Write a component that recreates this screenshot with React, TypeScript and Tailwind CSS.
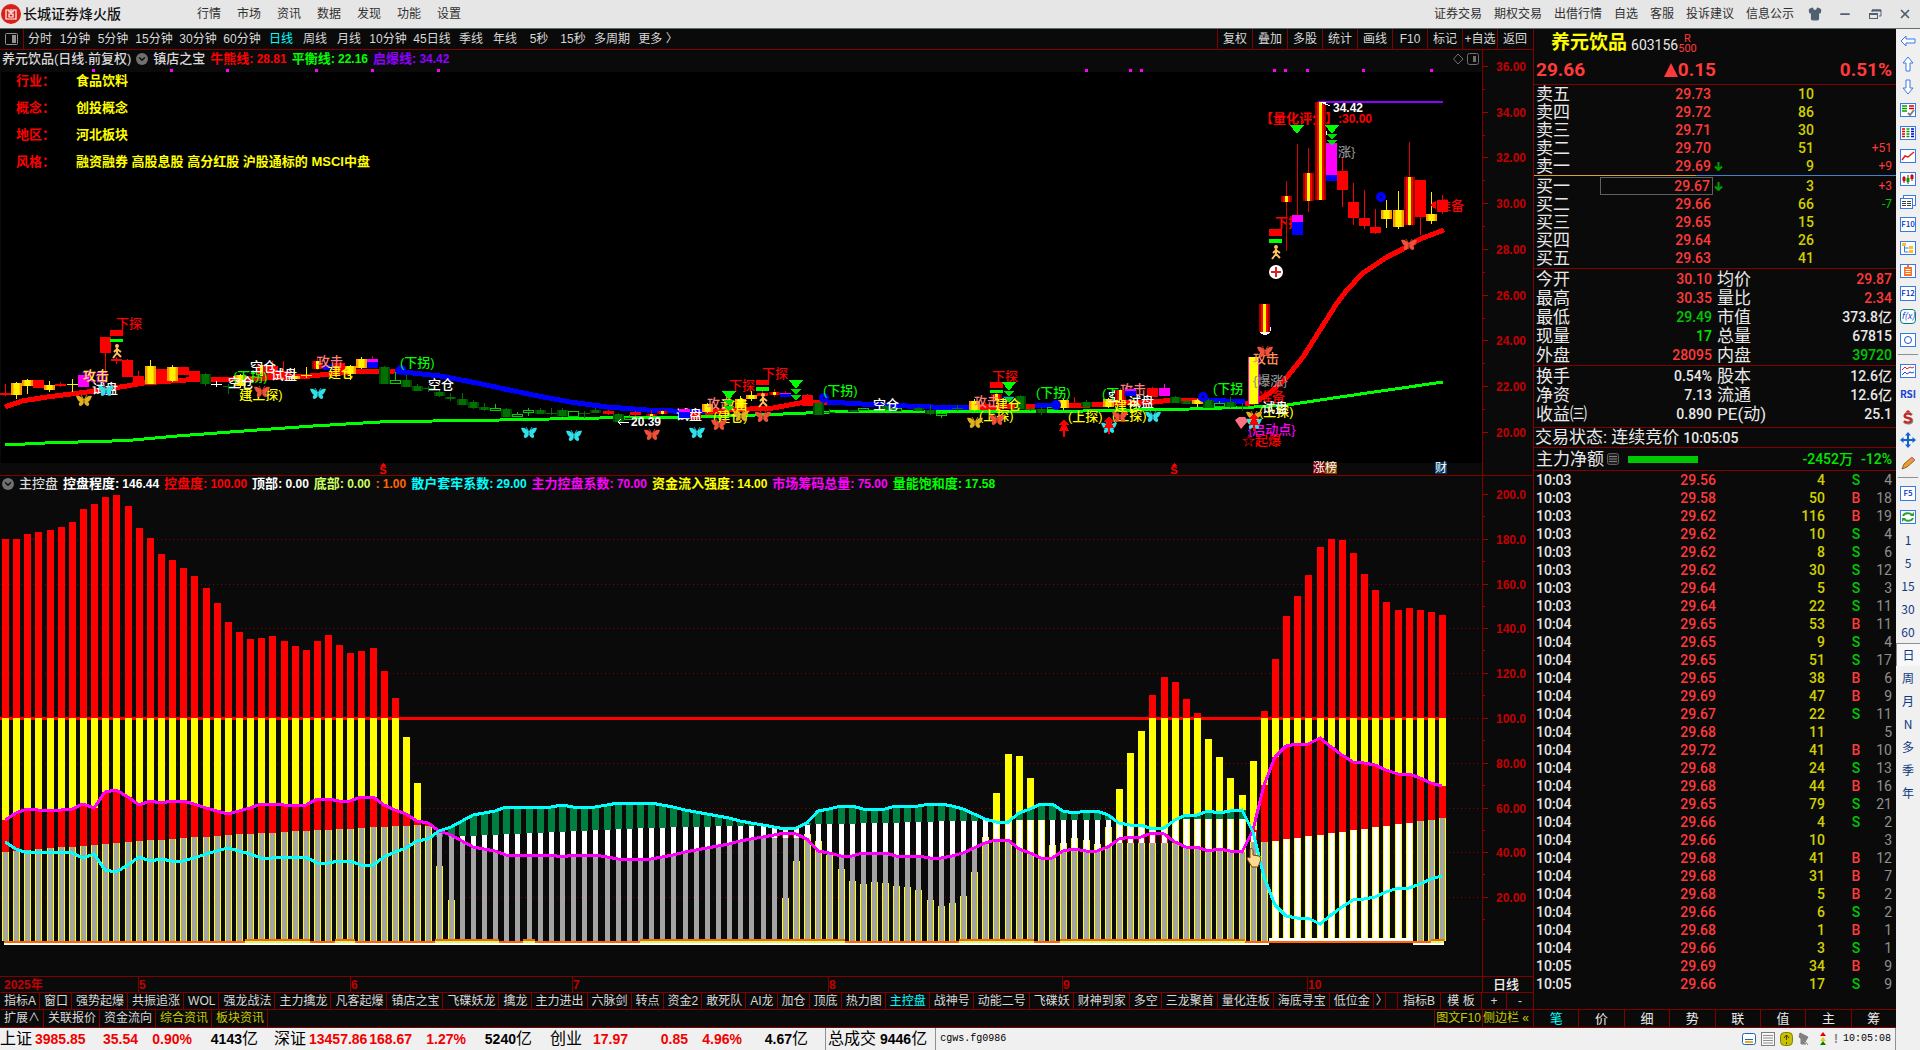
import type { ReactNode } from 'react';
import { Shirt, Minus, X, ChevronDown } from 'lucide-react';

const menus = ['行情', '市场', '资讯', '数据', '发现', '功能', '设置'];
const links = ['证券交易', '期权交易', '出借行情', '自选', '客服', '投诉建议', '信息公示'];

const periods: [string, string][] = [
  ['分时', 'w-8'],
  ['1分钟', 'w-[38px]'],
  ['5分钟', 'w-[38px]'],
  ['15分钟', 'w-11'],
  ['30分钟', 'w-11'],
  ['60分钟', 'w-11'],
  ['日线', 'w-[34px]'],
  ['周线', 'w-[34px]'],
  ['月线', 'w-[34px]'],
  ['10分钟', 'w-11'],
  ['45日线', 'w-11'],
  ['季线', 'w-[34px]'],
  ['年线', 'w-[34px]'],
  ['5秒', 'w-[34px]'],
  ['15秒', 'w-[34px]'],
  ['多周期', 'w-11'],
  ['更多 〉', 'w-12'],
];
const tools = ['复权', '叠加', '多股', '统计', '画线', 'F10', '标记', '+自选', '返回'];

const info = [
  ['行业：', '食品饮料'],
  ['概念：', '创投概念'],
  ['地区：', '河北板块'],
  ['风格：', '融资融券 高股息股 高分红股 沪股通标的 MSCI中盘'],
];

const mainLegend = [
  ['牛熊线:', '28.81', 'text-[#ff0000]'],
  ['平衡线:', '22.16', 'text-[#00ff00]'],
  ['启爆线:', '34.42', 'text-[#9000ff]'],
];
const subLegend = [
  ['控盘程度:', '146.44', 'text-white'],
  ['控盘度:', '100.00', 'text-[#ff0000]'],
  ['顶部:', '0.00', 'text-white'],
  ['底部:', '0.00', 'text-[#ccff66]'],
  [':', '1.00', 'text-[#ff6600]'],
  ['散户套牢系数:', '29.00', 'text-[#00ffff]'],
  ['主力控盘系数:', '70.00', 'text-[#ff00ff]'],
  ['资金流入强度:', '14.00', 'text-[#ffff00]'],
  ['市场筹码总量:', '75.00', 'text-[#ff00ff]'],
  ['量能饱和度:', '17.58', 'text-[#00ff00]'],
];

const tabs = [
  '指标A', '窗口', '强势起爆', '共振追涨', 'WOL', '强龙战法', '主力擒龙', '凡客起爆', '镇店之宝', '飞碟妖龙',
  '擒龙', '主力进出', '六脉剑', '转点', '资金2', '敢死队', 'AI龙', '加仓', '顶底', '热力图', '主控盘', '战神号',
  '动能二号', '飞碟妖', '财神到家', '多空', '三龙聚首', '量化连板', '海底寻宝', '低位金',
];

const asks = [
  ['卖五', '29.73', '', '10', ''],
  ['卖四', '29.72', '', '86', ''],
  ['卖三', '29.71', '', '30', ''],
  ['卖二', '29.70', '', '51', '+51'],
  ['卖一', '29.69', 'd', '9', '+9'],
];
const bids = [
  ['买一', '29.67', 'd', '3', '+3'],
  ['买二', '29.66', '', '66', '-7'],
  ['买三', '29.65', '', '15', ''],
  ['买四', '29.64', '', '26', ''],
  ['买五', '29.63', '', '41', ''],
];

const R = 'text-[#ff3a3a]';
const G = 'text-[#00c800]';
const W = 'text-[#e8e8e8]';
const stats1 = [
  ['今开', '30.10', R, '均价', '29.87', R],
  ['最高', '30.35', R, '量比', '2.34', R],
  ['最低', '29.49', G, '市值', '373.8亿', W],
  ['现量', '17', 'text-[#00e600]', '总量', '67815', W],
  ['外盘', '28095', R, '内盘', '39720', G],
];
const stats2 = [
  ['换手', '0.54%', W, '股本', '12.6亿', W],
  ['净资', '7.13', W, '流通', '12.6亿', W],
  ['收益㈢', '0.890', W, 'PE(动)', '25.1', W],
];

const ticks = [
  ['10:03', '29.56', '4', 'S', '4'],
  ['10:03', '29.58', '50', 'B', '18'],
  ['10:03', '29.62', '116', 'B', '19'],
  ['10:03', '29.62', '10', 'S', '4'],
  ['10:03', '29.62', '8', 'S', '6'],
  ['10:03', '29.62', '30', 'S', '12'],
  ['10:03', '29.64', '5', 'S', '3'],
  ['10:03', '29.64', '22', 'S', '11'],
  ['10:04', '29.65', '53', 'B', '11'],
  ['10:04', '29.65', '9', 'S', '4'],
  ['10:04', '29.65', '51', 'S', '17'],
  ['10:04', '29.65', '38', 'B', '6'],
  ['10:04', '29.69', '47', 'B', '9'],
  ['10:04', '29.67', '22', 'S', '11'],
  ['10:04', '29.68', '11', '', '5'],
  ['10:04', '29.72', '41', 'B', '10'],
  ['10:04', '29.68', '24', 'S', '13'],
  ['10:04', '29.68', '44', 'B', '16'],
  ['10:04', '29.65', '79', 'S', '21'],
  ['10:04', '29.66', '4', 'S', '2'],
  ['10:04', '29.66', '10', '', '3'],
  ['10:04', '29.68', '41', 'B', '12'],
  ['10:04', '29.68', '31', 'B', '7'],
  ['10:04', '29.68', '5', 'B', '2'],
  ['10:04', '29.66', '6', 'S', '2'],
  ['10:04', '29.68', '1', 'B', '1'],
  ['10:04', '29.66', '3', 'S', '1'],
  ['10:05', '29.69', '34', 'B', '9'],
  ['10:05', '29.66', '17', 'S', '9'],
];

/* ---------- main chart ---------- */

// kind, x, body top, body bottom, wick top, wick bottom
type CandleRow = [string, number, number, number, number, number];
const candles: CandleRow[] = [
  ['r', 0, 393, 395, 384, 396], ['y', 11, 383, 395, 382, 399], ['y', 22, 380, 386, 379, 394], ['r', 33, 380, 388, 380, 388],
  ['y', 44, 385, 390, 381, 392], ['r', 55, 384, 386, 382, 387], ['y1', 67, 384, 385, 379, 392], ['m', 78, 375, 387, 375, 387],
  ['r', 100, 337, 353, 337, 371], ['r', 111, 359, 361, 357, 364], ['r', 122, 360, 377, 359, 377], ['r', 133, 376, 386, 371, 386],
  ['r', 156, 369, 382, 369, 382], ['y', 145, 366, 384, 360, 384], ['r', 178, 367, 375, 367, 375], ['y', 167, 367, 381, 365, 382],
  ['r', 189, 371, 381, 371, 381], ['g', 200, 374, 384, 373, 386], ['w1', 211, 384, 385, 381, 387], ['g1', 223, 386, 387, 384, 394],
  ['y', 235, 375, 386, 374, 388], ['r', 267, 366, 379, 361, 379], ['ry', 256, 365, 376, 364, 378], ['r', 278, 371, 379, 361, 379],
  ['y', 289, 376, 379, 368, 379], ['y1', 301, 375, 376, 367, 378], ['ry', 312, 361, 369, 356, 370], ['b', 323, 365, 370, 364, 370],
  ['r', 334, 363, 372, 363, 372], ['y', 345, 366, 374, 365, 380], ['y', 356, 359, 368, 357, 369], ['mb', 367, 359, 368, 356, 368],
  ['g', 379, 367, 384, 366, 384], ['h', 390, 380, 384, 372, 384], ['g', 401, 380, 387, 375, 387], ['g', 412, 386, 391, 384, 391],
  ['g1', 423, 388, 389, 386, 392], ['g', 434, 392, 396, 390, 397], ['g', 445, 397, 399, 393, 401], ['g', 457, 399, 405, 393, 405],
  ['g', 468, 402, 408, 400, 409], ['g', 479, 407, 410, 403, 411], ['h', 490, 408, 411, 404, 411],
  ['g', 501, 409, 417, 408, 417], ['h', 512, 414, 417, 412, 417], ['h', 523, 410, 413, 408, 416], ['g', 535, 410, 414, 408, 414],
  ['g1', 546, 413, 414, 408, 415], ['g', 557, 410, 416, 408, 417], ['h', 568, 411, 417, 411, 417], ['g1', 579, 413, 414, 411, 418],
  ['g', 590, 410, 413, 408, 413], ['r', 603, 411, 414, 410, 415], ['g', 613, 414, 422, 413, 422], ['h', 624, 417, 420, 415, 420],
  ['r', 630, 412, 415, 411, 416], ['ry', 646, 414, 416, 410, 417], ['ry', 657, 411, 414, 410, 415], ['r', 690, 413, 419, 410, 419],
  ['y', 702, 404, 412, 403, 413], ['y', 735, 399, 408, 396, 408], ['y', 746, 395, 399, 391, 401],
  ['r', 757, 393, 396, 391, 397], ['ry', 769, 392, 395, 389, 397], ['mb', 780, 393, 397, 391, 397], ['r', 802, 395, 406, 394, 406],
  ['g', 813, 403, 415, 402, 415], ['g1', 824, 412, 413, 409, 414], ['g', 848, 410, 412, 410, 412], ['h', 858, 408, 411, 408, 411],
  ['g', 880, 406, 410, 405, 411], ['h', 891, 408, 412, 408, 412], ['g', 913, 408, 411, 407, 411], ['g', 925, 410, 414, 405, 415],
  ['h', 936, 413, 416, 411, 418], ['g1', 952, 408, 409, 405, 411], ['y', 969, 401, 410, 399, 411], ['r', 980, 404, 410, 402, 410],
  ['ry', 991, 394, 400, 393, 404], ['b', 1003, 396, 401, 395, 401], ['g', 1015, 396, 409, 395, 409], ['g1', 1025, 409, 410, 407, 411],
  ['g', 1036, 409, 413, 407, 415], ['h', 1047, 407, 410, 404, 410], ['y', 1058, 400, 408, 399, 410], ['r', 1069, 403, 407, 397, 408],
  ['g', 1081, 402, 407, 400, 408], ['y', 1103, 399, 407, 398, 408], ['r', 1147, 388, 397, 387, 397], ['m', 1159, 388, 396, 384, 396],
  ['g', 1170, 397, 403, 396, 403], ['g', 1181, 401, 404, 400, 404],
  ['y', 1192, 400, 404, 399, 407], ['g', 1203, 400, 408, 399, 408], ['h', 1214, 403, 407, 401, 407], ['g', 1225, 402, 407, 397, 408],
  ['g1', 1237, 406, 407, 403, 411], ['my', 1248, 357, 404, 357, 404], ['ry', 1259, 304, 332, 304, 332], ['ry', 1281, 196, 202, 181, 251],
  ['mb', 1292, 215, 235, 144, 235], ['ry', 1303, 173, 201, 148, 212], ['ry', 1315, 102, 200, 102, 200], ['mb2', 1326, 143, 181, 143, 181],
  ['r', 1337, 171, 190, 157, 207], ['r', 1348, 202, 218, 183, 225], ['r', 1359, 218, 226, 190, 229], ['r', 1370, 227, 233, 209, 234],
  ['y', 1381, 210, 219, 200, 228], ['y', 1393, 210, 227, 191, 229], ['ry', 1404, 177, 225, 142, 226], ['r', 1415, 180, 217, 180, 235],
  ['y', 1426, 214, 221, 192, 224], ['r', 1437, 200, 212, 195, 214],
];
// drawn over the signal texts
const topCandles: CandleRow[] = [
  ['mb', 679, 409, 418, 408, 418], ['ry', 1115, 390, 400, 388, 402], ['mb', 1125, 389, 396, 388, 396],
];

const wickColors: Record<string, string> = {
  r: '#ff0000', ry: '#dd0000', y: '#ffee00', y1: '#ffee00', g: '#007000', g1: '#007000', w1: '#ffffff',
  h: '#00d000', m: '#ff00ff', mb: '#dd0000', mb2: '#ff00ff', my: '#ff00ff', b: '#0000ff',
};

function Candle({ row }: { row: CandleRow }) {
  const [kind, x, top, bottom, wt, wb] = row;
  const h = bottom - top;
  const wick = wickColors[kind];
  return (
    <g>
      <rect x={x + 5} y={wt} width={1} height={wb - wt} fill={wick} />
      {kind === 'r' && <rect x={x} y={top} width={11} height={h} fill="#ff0000" />}
      {kind === 'm' && <rect x={x} y={top} width={11} height={h} fill="#ff00ff" />}
      {kind === 'b' && <rect x={x} y={top} width={11} height={h} fill="#0000ff" />}
      {kind === 'g' && <><rect x={x} y={top} width={11} height={h} fill="#004800" /><rect x={x + 2} y={top} width={7} height={h} fill="#007000" /></>}
      {kind === 'h' && <><rect x={x} y={top} width={11} height={h} fill="#00d000" /><rect x={x + 1} y={top + 1} width={9} height={Math.max(h - 2, 1)} fill="#000000" /></>}
      {kind === 'y' && <><rect x={x} y={top} width={11} height={h} fill="#ff9900" /><rect x={x + 2} y={top} width={7} height={h} fill="#ffcc00" /><rect x={x + 3} y={top} width={5} height={h} fill="#fff000" /></>}
      {kind === 'ry' && <><rect x={x} y={top} width={11} height={h} fill="#990000" /><rect x={x + 2} y={top} width={7} height={h} fill="#ff0000" /><rect x={x + 4} y={top} width={3} height={h} fill="#ffff00" /></>}
      {kind === 'my' && <><rect x={x} y={top} width={11} height={h} fill="#ff00ff" /><rect x={x + 1} y={top} width={9} height={h} fill="#ffff00" /></>}
      {kind === 'mb' && <><rect x={x} y={top} width={11} height={h} fill="#0000ff" /><rect x={x} y={top} width={11} height={h * 0.35} fill="#ff00ff" /></>}
      {kind === 'mb2' && <><rect x={x} y={top} width={11} height={h} fill="#0000ff" /><rect x={x} y={top} width={11} height={h - 6} fill="#ff00ff" /></>}
      {(kind === 'y1' || kind === 'g1' || kind === 'w1') && <rect x={x} y={top} width={11} height={1} fill={wick} />}
    </g>
  );
}

const marks: [string, number, number, string][] = [
  ['下探', 116, 323, '#ff0000'], ['攻击', 82, 376, '#ff00ff'], ['攻击', 83, 375, '#ffe640'], ['试盘', 92, 388, '#ffffff'],
  ['(下拐)', 233, 376, '#00ff00'], ['空仓', 250, 366, '#ffffff'], ['空仓', 228, 382, '#ffffff'], ['试盘', 271, 374, '#ffffff'],
  ['建', 239, 394, '#ffff00'], ['(上探)', 248, 394, '#ffff00'], ['攻击', 317, 361, '#ff8080'], ['建仓', 328, 372, '#ffff00'],
  ['(下拐)', 400, 362, '#00ff00'], ['空仓', 428, 384, '#ffffff'], ['试盘', 676, 414, '#ffffff'],
  ['攻击', 707, 403, '#ff8080'], ['攻击', 722, 404, '#ffff00'], ['(建仓)', 713, 416, '#ffff00'], ['下探', 729, 385, '#ff0000'],
  ['下探', 762, 373, '#ff0000'], ['(下拐)', 823, 390, '#00ff00'], ['空仓', 873, 404, '#ffffff'],
  ['下探', 992, 376, '#ff0000'], ['攻击', 974, 401, '#ff8080'], ['建仓', 995, 404, '#ffff00'], ['(上探)', 979, 415, '#ffff00'],
  ['(下拐)', 1036, 392, '#00ff00'], ['(上探)', 1068, 416, '#ffff00'], ['(下', 1102, 393, '#00ff00'], ['空', 1108, 396, '#ffffff'],
  ['攻击', 1120, 389, '#ff8080'], ['建仓', 1114, 405, '#ffff00'], ['(上探)', 1112, 415, '#ffff00'], ['试盘', 1128, 401, '#ffffff'],
  ['(下拐', 1213, 388, '#00ff00'], ['攻击', 1253, 358, '#ff9060'], ['{爆涨}', 1253, 380, '#909090'], ['准备', 1259, 396, '#ff0000'],
  ['(上探)', 1259, 411, '#ffff00'], ['试盘', 1262, 407, '#ffffff'], ['{启动点}', 1248, 429, '#ff00ff'], ['☆起爆', 1242, 440, '#ff0000'],
  ['涨}', 1338, 151, '#909090'], ['准备', 1438, 205, '#ff0000'],
];

const flies: [number, number, string][] = [
  [84, 401, '#e0b020'], [106, 391, '#30e0e8'], [262, 392, '#f05038'], [318, 394, '#30e0e8'], [529, 433, '#30e0e8'],
  [574, 436, '#30e0e8'], [652, 435, '#f05038'], [697, 433, '#30e0e8'], [719, 425, '#f05038'], [741, 416, '#e0b020'],
  [763, 417, '#f05038'], [975, 423, '#e0b020'], [997, 420, '#f05038'], [1109, 428, '#30e0e8'], [1120, 417, '#f05038'],
  [1153, 417, '#30e0e8'], [1254, 417, '#e0b020'], [1254, 424, '#30e0e8'], [1265, 352, '#f05038'], [1409, 245, '#f05038'],
];

function Butterfly({ x, y, color }: { x: number; y: number; color: string }) {
  return (
    <g transform={`translate(${x} ${y})`} shapeRendering="auto">
      <path d="M0-1C-2-4-5-6-8-5C-7-2-6 0-4 1C-6 2-5 5-4 5C-2 5-1 3 0 2C1 3 2 5 4 5C5 5 6 2 4 1C6 0 7-2 8-5C5-6 2-4 0-1Z" fill={color} />
      <path d="M0-1L-3-6M0-1L3-6" stroke={color} strokeWidth="0.8" />
      <path d="M0-1V3" stroke="#000000" strokeOpacity="0.5" />
    </g>
  );
}

function Runner({ x, y }: { x: number; y: number }) {
  return (
    <g transform={`translate(${x} ${y})`} shapeRendering="auto" stroke="#ffc060" strokeWidth="2" fill="none">
      <circle cx="0" cy="-6" r="1" />
      <path d="M0-4V1L-4 6M0 1L4 5M-3 0L0-3L4 0" />
    </g>
  );
}

function Downs({ x, y }: { x: number; y: number }) {
  return (
    <g fill="#00e000">
      <path d={`M${x - 7} ${y - 4}h14l-7 9z`} fill="#00ff00" />
      <path d={`M${x - 5} ${y + 5}h10l-5 6z`} />
      <path d={`M${x - 5} ${y + 11}h10l-5 6z`} />
    </g>
  );
}

function Ups({ x, y }: { x: number; y: number }) {
  return <path d={`M${x} ${y - 8}l5 6h-3l3 6h-4v6h-2v-6h-4l3-6h-3z`} fill="#ff0000" />;
}

const prices = [36, 34, 32, 30, 28, 26, 24, 22, 20];
const dots = [92, 170, 226, 315, 371, 437, 1085, 1129, 1140, 1273, 1284, 1306, 1362, 1430];

function MainChart() {
  return (
    <svg viewBox="0 50 1533 426" className="block h-auto w-full" shapeRendering="crispEdges">
      <rect x="0" y="50" width="1533" height="426" fill="#0a0a0a" />
      <rect x="1" y="72" width="1481" height="391" fill="#000000" />
      <rect x="1482" y="50" width="1" height="426" fill="#800000" />
      {prices.map((p, i) => (
        <g key={p}>
          <rect x="1483" y={66 + i * 45.7} width="5" height="1" fill="#a00000" />
          {i < 8 && <rect x="1483" y={89 + i * 45.7} width="2" height="1" fill="#a00000" />}
          <text x="1496" y={71 + i * 45.7} fontSize="12" fontWeight="700" fill="#c40000">{p.toFixed(2)}</text>
        </g>
      ))}
      {dots.map((x) => <rect key={x} x={x} y="69" width="3" height="3" fill="#ff00ff" />)}

      <g fill="none" strokeWidth="5">
        <polyline stroke="#ff0000" points="5,407 22,401 47,397 87,392 127,386 143,383 200,379 233,379 267,378 310,376 350,372 395,371" />
        <polyline stroke="#0000ff" points="395,371 440,376 477,383 500,388 533,395 570,402 607,407 647,410 673,411 707,412" />
        <polyline stroke="#ff0000" points="705,413 730,410 750,409 773,408 800,403 827,402" />
        <polyline stroke="#0000ff" points="827,402 880,405 933,407 970,408" />
        <polyline stroke="#ff0000" points="970,408 1000,407 1035,406" />
        <polyline stroke="#0000ff" points="1035,406 1058,405" />
        <polyline stroke="#ff0000" points="1058,406 1090,405 1126,403 1154,402 1172,400 1206,400" />
        <polyline stroke="#0000ff" points="1206,400 1245,402" />
        <polyline stroke="#ff0000" points="1245,404 1255,402 1270,393 1287,377 1303,357 1320,330 1337,303 1347,290 1363,273 1387,257 1403,249 1420,239 1444,230" />
        <polyline stroke="#00ff00" strokeWidth="3" points="5,445 45,443 112,441 133,440 177,436 257,430 313,426 380,422 433,421 500,420 600,418 700,417 783,414 853,411 940,411 1083,411 1190,409 1254,407 1287,405 1340,397 1443,382" />
      </g>
      <rect x="1318" y="101" width="125" height="2" fill="#9000ff" />

      <g fontSize="13" fontWeight="700" dominantBaseline="central">
        <text x="1260" y="118" fill="#ff0000">【量化评分】</text>
        <text x="1338" y="119" fontSize="12" fill="#ff0000">:30.00</text>
        <text x="1275" y="222" fill="#ff0000">下探</text>
      </g>
      <circle cx="1265" cy="329" r="6" fill="#ffffff" />
      <circle cx="1321" cy="133" r="6" fill="#ffffff" />
      {candles.map((c, i) => <Candle key={i} row={c} />)}

      {/* board flags above the spikes */}
      <rect x="110" y="330" width="13" height="6" fill="#ff0000" />
      <rect x="110" y="339" width="13" height="3" fill="#00ff00" />
      <rect x="756" y="380" width="13" height="5" fill="#ff0000" />
      <rect x="756" y="387" width="13" height="4" fill="#00ff00" />
      <rect x="990" y="382" width="13" height="6" fill="#ff0000" />
      <rect x="990" y="390" width="13" height="3" fill="#00ff00" />
      <rect x="1269" y="229" width="13" height="7" fill="#ff0000" />
      <rect x="1269" y="239" width="13" height="4" fill="#00ff00" />

      <g fill="none" stroke="#0000ff" strokeWidth="4" shapeRendering="auto">
        <circle cx="401" cy="370" r="3" />
        <circle cx="824" cy="398" r="3" />
        <circle cx="1056" cy="405" r="3" />
        <circle cx="1203" cy="397" r="3" />
        <circle cx="1381" cy="197" r="3" />
      </g>
      <circle cx="1276" cy="272" r="7" fill="#ffffff" shapeRendering="auto" />
      <path d="M1271 272h10M1276 267v10" stroke="#e02020" strokeWidth="2" />

      <g fontSize="13" fontWeight="500" dominantBaseline="central">
        {marks.map(([t, x, y, c], i) => <text key={i} x={x} y={y} fill={c}>{t}</text>)}
      </g>
      {topCandles.map((c, i) => <Candle key={i} row={c} />)}
      <path d="M1431 205l4-3v6z" fill="#ff0000" stroke="#ff0000" />
      <rect x="1437" y="200" width="11" height="12" fill="#ff0000" />
      {flies.map(([x, y, c], i) => <Butterfly key={i} x={x} y={y} color={c} />)}
      <Runner x={117} y={352} />
      <Runner x={763} y={401} />
      <Runner x={1276} y={253} />
      <Downs x={729} y={395} />
      <Downs x={796} y={384} />
      <Downs x={1009} y={386} />
      <Downs x={1332} y={129} />
      <path d="M1290 125h14l-7 9z" fill="#00ff00" />
      <Ups x={1064} y={427} />
      <Ups x={1109} y={424} />
      <Ups x={1254} y={421} />
      <path d="M1235 420l4-3h6l3 4l-7 8z" fill="#ff7080" shapeRendering="auto" />

      <g fontSize="12" fontWeight="700" fill="#ffffff">
        <text x="631" y="426">20.39</text>
        <text x="1333" y="112">34.42</text>
        <path d="M618 422h11M621 419l-3 3l3 3M1321 102l9 4M1321 105v-3h5" stroke="#ffffff" fill="none" />
      </g>

      <g fontSize="11" fontWeight="700" fill="#ff0000" textAnchor="middle">
        <text x="383" y="474">S</text>
        <text x="1174" y="474">S</text>
        <path d="M380 466l3-3l3 3zM1171 466l3-3l3 3z" />
      </g>
      <rect x="1313" y="462" width="12" height="12" fill="#780000" />
      <rect x="1325" y="462" width="12" height="12" fill="#804000" />
      <rect x="1435" y="462" width="12" height="12" fill="#003868" />
      <g fontSize="12" fill="#ffffff" dominantBaseline="central">
        <text x="1313" y="468">涨</text>
        <text x="1325" y="468">榜</text>
        <text x="1435" y="468">财</text>
      </g>
      <rect x="0" y="475" width="1533" height="1" fill="#800000" />
    </svg>
  );
}

/* ---------- indicator chart ---------- */

const N = 130;
const BASE = 941;

// y of the control bar top, 0 where there is none
const control = [
  539, 539, 534, 532, 530, 527, 522, 509, 504, 497, 495, 506, 528, 538, 554, 560, 568, 576, 588, 603, 622, 632, 639, 638, 636,
  641, 646, 650, 641, 635, 645, 653, 651, 648, 671, 698, 737, 783, 825, 866, 900,
  0, 0, 0, 0, 0, 0, 0, 0, 0, 0, 0, 0, 0, 0, 0, 0, 0, 0, 0, 0, 0, 0, 0, 0, 0, 0, 0, 0, 0,
  898, 861, 834, 841, 855, 869, 881, 884, 882, 883, 886, 887, 890, 900, 906, 903, 896, 872, 837, 793, 754, 756, 778, 809,
  845, 843, 838, 840, 844, 827, 789, 753, 731, 695, 677, 682, 699, 713, 739, 757, 778, 795, 761, 711, 659, 616, 596, 575,
  547, 539, 540, 553, 574, 590, 602, 610, 608, 610, 612, 615,
];

const force = [
  820, 813, 809, 810, 810, 810, 809, 804, 808, 792, 790, 797, 805, 801, 803, 801, 801, 804, 808, 811, 814, 811, 808, 804, 804,
  805, 805, 805, 799, 799, 801, 801, 797, 797, 805, 810, 814, 821, 823, 831, 835, 841, 847, 849, 851, 855, 855, 855, 855, 855,
  857, 855, 855, 855, 857, 859, 859, 859, 859, 857, 855, 852, 850, 848, 846, 844, 841, 839, 837, 835, 833, 834, 839, 851, 853,
  856, 856, 853, 853, 853, 856, 856, 856, 858, 858, 856, 853, 848, 843, 840, 840, 849, 853, 858, 858, 851, 849, 851, 851, 847,
  839, 837, 837, 833, 834, 842, 847, 847, 851, 849, 851, 852, 830, 785, 757, 746, 744, 744, 738, 747, 755, 762, 763, 765, 770,
  774, 774, 778, 783, 786,
];

const grayLine: [number, number][] = [[0, 852], [12, 841], [20, 835], [37, 825], [45, 830], [69, 838], [89, 842], [108, 843], [113, 842], [129, 818]];
const whiteLine: [number, number][] = [[0, 840], [39, 837], [57, 828], [75, 824], [89, 820], [129, 818]];

function lerp(pts: [number, number][], i: number) {
  for (let k = 1; k < pts.length; k++) {
    const [x0, y0] = pts[k - 1];
    const [x1, y1] = pts[k];
    if (i <= x1) return Math.round(y0 + ((y1 - y0) * (i - x0)) / (x1 - x0));
  }
  return pts[pts.length - 1][1];
}

function Bar({ i }: { i: number }) {
  const x = Math.round(2 + i * 11.14);
  const c = control[i];
  const m = force[i];
  const s = 1662 - m;
  const g = lerp(grayLine, i);
  const w = lerp(whiteLine, i);
  const grayTop = Math.max(m, g);
  const mid = i > 38 && i < 113;
  const whiteTop = Math.max(s, w);
  const filled = i > 113 && i < 127;
  return (
    <g>
      {c > 0 && <rect x={x} y={Math.max(c, 718)} width={7} height={BASE - Math.max(c, 718)} fill="#ffff00" />}
      {c > 0 && c < 718 && <rect x={x} y={c} width={7} height={718 - c} fill="#ff0000" />}
      {m < g && <rect x={x} y={m} width={7} height={g - m} fill="#ff0000" />}
      {mid && s < w && <rect x={x} y={s} width={7} height={w - s} fill="#008040" />}
      {mid && whiteTop < grayTop && <rect x={x + 1} y={whiteTop} width={5} height={grayTop - whiteTop} fill="#ffffff" />}
      <rect x={x + 1} y={grayTop} width={5} height={BASE - grayTop} fill={filled ? '#ffffff' : '#a4a4a4'} />
    </g>
  );
}

const bars = Array.from({ length: N }, (_, i) => i);
const forcePts = force.map((y, i) => `${Math.round(5 + i * 11.14)},${y}`).join(' ');
const retailPts = force.map((y, i) => `${Math.round(5 + i * 11.14)},${1662 - y}`).join(' ');
const bumps: [number, number][] = [[245, 310], [335, 355], [435, 499], [523, 535], [640, 845], [959, 1034], [1060, 1245], [1431, 1444]];
const scale = ['200.0', '180.0', '160.0', '140.0', '120.0', '100.0', '80.00', '60.00', '40.00', '20.00'];
const months: [string, number][] = [['5', 138], ['6', 350], ['7', 572], ['8', 828], ['9', 1062], ['10', 1307]];

function SubChart() {
  return (
    <svg viewBox="0 476 1533 517" className="block h-auto w-full" shapeRendering="crispEdges">
      <rect x="0" y="476" width="1533" height="517" fill="#0a0a0a" />
      {scale.map((t, i) => {
        const y = Math.round(494 + i * 44.8);
        return (
          <g key={t}>
            {i > 0 && <line x1="1" x2="1480" y1={y + 0.5} y2={y + 0.5} stroke="#800000" strokeDasharray="1 3" />}
            <rect x="1483" y={y} width="5" height="1" fill="#a00000" />
            <rect x="1483" y={y + 22} width="2" height="1" fill="#a00000" />
            <text x="1496" y={y + 5} fontSize="12" fontWeight="700" fill="#c40000">{t}</text>
          </g>
        );
      })}
      <rect x="0" y="717" width="1446" height="3" fill="#ff0000" />
      {bars.map((i) => <Bar key={i} i={i} />)}
      <polyline points={forcePts} fill="none" stroke="#ff00ff" strokeWidth="3" />
      <polyline points={retailPts} fill="none" stroke="#00ffff" strokeWidth="3" />

      <rect x="4" y="943" width="1265" height="2" fill="#ffffff" />
      <rect x="1413" y="943" width="31" height="2" fill="#ffffff" />
      <rect x="1269" y="938" width="144" height="4" fill="#ffffff" />
      <rect x="4" y="941" width="1440" height="2" fill="#ff6600" />
      {bumps.map(([a, b]) => (
        <g key={a}>
          <rect x={a} y="941" width={b - a} height="2" fill="#ccff66" />
          <rect x={a} y="939" width={b - a} height="2" fill="#ff6600" />
        </g>
      ))}

      {/* hand cursor */}
      <path d="M1250 849c1-1 3 0 3 1v5l6 1c2 1 2 3 1 6l-2 5h-6l-5-8c0-2 2-2 3-1z" fill="#ffd890" stroke="#704010" shapeRendering="auto" />

      <rect x="1482" y="476" width="1" height="517" fill="#800000" />
      <rect x="0" y="976" width="1533" height="1" fill="#800000" />
      <rect x="0" y="992" width="1533" height="1" fill="#800000" />
      <g fontSize="12" fontWeight="700" fill="#c40000">
        <text x="4" y="989">2025年</text>
        {months.map(([t, x]) => (
          <g key={t}>
            <rect x={x} y="977" width="1" height="15" fill="#800000" />
            <text x={x + 1} y="989">{t}</text>
          </g>
        ))}
      </g>
      <text x="1506" y="989" fontSize="13" fontWeight="500" fill="#f0f0f0" textAnchor="middle">日线</text>
    </svg>
  );
}

/* ---------- legends ---------- */

function Legend({ items }: { items: string[][] }) {
  return (
    <>
      {items.map(([label, value, color]) => (
        <span key={label} className={'flex items-center gap-[3px] ' + color}>
          <span>{label}</span>
          <span className="text-xs">{value}</span>
        </span>
      ))}
    </>
  );
}

function Fold() {
  return (
    <button type="button" aria-label="折叠" className="flex size-3 items-center justify-center rounded-full bg-[#707070] text-[#0a0a0a]">
      <ChevronDown size={10} strokeWidth={3} />
    </button>
  );
}

/* ---------- quote panel ---------- */

function Book({ rows, active }: { rows: string[][]; active?: boolean }) {
  return (
    <table className="w-full table-fixed">
      <tbody>
        {rows.map(([label, price, dir, qty, delta], i) => (
          <tr key={label} className="h-[18px]">
            <th className="w-[66px] pl-0.5 text-left text-[17px] leading-[18px] font-normal text-[#e8e8e8]">{label}</th>
            <td className={'w-[113px] p-0 text-right ' + R}>
              <span className={'block h-[18px] pr-0.5 ' + (active && i === 0 ? 'border border-[#606060] leading-4' : 'leading-[18px]')}>{price}</span>
            </td>
            <td className="w-3 p-0">
              {dir && (
                <svg viewBox="0 0 9 9" className="mx-px size-[9px]">
                  <path d="M4.500 0V8M1 4.500L4.500 8L8 4.500" stroke="#00a000" strokeWidth="2" fill="none" />
                </svg>
              )}
            </td>
            <td className="w-[89px] p-0 text-right leading-[18px] text-[#d0d000]">{qty}</td>
            <td className={'p-0 pr-1 text-right text-xs leading-[18px] font-normal ' + (delta.startsWith('-') ? G : R)}>{delta}</td>
          </tr>
        ))}
      </tbody>
    </table>
  );
}

function Stats({ rows }: { rows: string[][] }) {
  return (
    <table className="w-full table-fixed">
      <tbody>
        {rows.map(([a, av, ac, b, bv, bc]) => (
          <tr key={a} className="h-[19px]">
            <th className="w-[66px] pl-0.5 text-left text-[17px] leading-[19px] font-normal whitespace-nowrap text-[#e8e8e8]">{a}</th>
            <td className={'w-28 p-0 text-right leading-[19px] ' + ac}>{av}</td>
            <th className="w-[66px] pl-[5px] text-left text-[17px] leading-[19px] font-normal whitespace-nowrap text-[#e8e8e8]">{b}</th>
            <td className={'p-0 pr-1 text-right leading-[19px] ' + bc}>{bv}</td>
          </tr>
        ))}
      </tbody>
    </table>
  );
}

function QuotePanel() {
  return (
    <section className="flex w-[362px] shrink-0 flex-col bg-[#0a0a0a] font-[Roboto,'Noto_Sans_CJK_SC',sans-serif] text-sm font-medium">
      <div className="h-14 border-b border-[#800000]">
        <div className="flex h-7 items-center pl-[17px]">
          <h1 className="text-[19px] leading-6 font-bold text-[#ffff00]">养元饮品</h1>
          <span className="ml-1 pt-1 font-normal text-[#e8e8e8]">603156</span>
          <span className="flex flex-col items-center pt-px text-[11px] leading-[10px] font-normal text-[#ff3a3a]">
            <span>R</span>
            <span>500</span>
          </span>
        </div>
        <div className="flex items-center pr-1 pl-0.5 text-[19px] leading-[26px] font-bold text-[#ff3a3a]">
          <span className="w-[90px]">29.66</span>
          <span className="flex w-[90px] items-center justify-end">
            <svg viewBox="0 0 14 14" className="size-3.5"><path d="M7 0L14 14H0Z" fill="#ff3a3a" /></svg>
            <span aria-label="涨">0.15</span>
          </span>
          <span className="flex-1 text-right">0.51%</span>
        </div>
      </div>
      <Book rows={asks} />
      <div className="flex h-px">
        <div className="w-[162px] bg-[#e0a030]" />
        <div className="flex-1 bg-[#4080d0]" />
      </div>
      <div className="border-b border-[#800000] py-px">
        <Book rows={bids} active />
      </div>
      <div className="border-b border-[#800000] pt-px">
        <Stats rows={stats1} />
      </div>
      <div className="border-b border-[#800000] pt-px pb-[3px]">
        <Stats rows={stats2} />
      </div>
      <div className="flex h-5 items-center gap-1 border-b border-[#800000] pl-px whitespace-nowrap text-[#e8e8e8]">
        <span className="text-[17px] leading-[19px] font-normal">交易状态: 连续竞价</span>
        <span>10:05:05</span>
      </div>
      <div className="flex h-[23px] items-center border-b border-[#800000] pr-1 pl-0.5 text-[#00e600]">
        <span className="text-[17px] leading-5 font-normal text-[#e8e8e8]">主力净额</span>
        <svg viewBox="0 0 12 12" className="ml-[3px] size-3">
          <rect x="0.5" y="0.5" width="11" height="11" rx="2" fill="#202020" stroke="#606060" />
          <path d="M2 3.500h8M2 6h8M2 8.500h8" stroke="#808080" />
        </svg>
        <div className="ml-[9px] h-[7px] w-[70px] bg-[#00c800]" />
        <span className="ml-auto">-2452万</span>
        <span className="ml-2">-12%</span>
      </div>
      <table className="w-full table-fixed">
        <tbody>
          {ticks.map(([time, price, qty, side, cnt], i) => (
            <tr key={i} className="h-[18px] leading-[18px]">
              <td className="w-[68px] p-0 pl-0.5 text-[#e8e8e8]">{time}</td>
              <td className={'w-[114px] p-0 text-right ' + R}>{price}</td>
              <td className="w-[109px] p-0 text-right text-[#d0d000]">{qty}</td>
              <td className={'w-[62px] p-0 text-center ' + (side === 'B' ? R : G)}>{side}</td>
              <td className="w-auto p-0 pr-1 text-right font-normal text-[#909090]"><span className="float-right">{cnt}</span></td>
            </tr>
          ))}
        </tbody>
      </table>
      <div className="flex-1" />
      <div className="flex h-[19px] border-y border-[#800000] text-[13px] font-normal text-[#e8e8e8]">
        {['笔', '价', '细', '势', '联', '值', '主', '筹'].map((t) => (
          <button key={t} type="button" className={'flex-1 border-r border-[#800000] leading-4 last:border-r-0 ' + (t === '笔' ? 'text-[#00ffff]' : '')}>{t}</button>
        ))}
      </div>
    </section>
  );
}

/* ---------- right icon strip ---------- */

function Glyph({ children }: { children: ReactNode }) {
  return <svg viewBox="0 0 16 16" className="size-4" fill="none">{children}</svg>;
}

const box = <rect x="0.5" y="1.500" width="15" height="13" fill="#ffffff" stroke="#3878e8" />;

const icons: [string, ReactNode][] = [
  ['后退', <path d="M1 8L6 3V6H15V10H6V13Z" fill="#ffffff" stroke="#3878e8" />],
  ['上翻', <path d="M8 1L13 7H10V15H6V7H3Z" fill="#ffffff" stroke="#3878e8" />],
  ['下翻', <path d="M8 15L13 9H10V1H6V9H3Z" fill="#ffffff" stroke="#3878e8" />],
  ['自选', <>{box}<path d="M2 4h5M2 6.500h5M2 9h5" stroke="#00a000" strokeWidth="1.5" /><path d="M9 4h5M9 6.500h5" stroke="#e00000" strokeWidth="1.5" /><path d="M8 11l2 2l4-5" stroke="#808080" strokeWidth="2" /></>],
  ['报价', <>{box}<path d="M2 4h3M2 6.500h3M2 9h3M2 11.500h3" stroke="#e00000" strokeWidth="1.5" /><path d="M6.500 4h3M6.500 6.500h3M6.500 9h3M6.500 11.500h3" stroke="#00a000" strokeWidth="1.5" /><path d="M11 4h3M11 6.500h3M11 9h3M11 11.500h3" stroke="#0000e0" strokeWidth="1.5" /></>],
  ['走势', <>{box}<path d="M2 12L5 8L8 9L14 4" stroke="#e02020" strokeWidth="1.5" /></>],
  ['K线', <>{box}<path d="M4 5v7M8 4v9M12 3v7" stroke="#303030" /><rect x="2.500" y="6" width="3" height="4" fill="#e00000" /><rect x="6.500" y="7" width="3" height="4" fill="#00a000" /><rect x="10.500" y="4" width="3" height="4" fill="#e00000" /></>],
  ['多窗', <><rect x="3.500" y="1.500" width="12" height="10" fill="#ffffff" stroke="#3878e8" /><rect x="0.500" y="4.500" width="12" height="10" fill="#ffffff" stroke="#3878e8" /><path d="M2 7.500h4M7 7.500h4M2 9.500h4M7 9.500h4M2 11.500h4M7 11.500h4" stroke="#404040" /></>],
  ['F10', 'F10'],
  ['树图', <>{box}<rect x="2" y="3" width="4" height="3" fill="#ffc020" /><rect x="9" y="6" width="4" height="3" fill="#ffc020" /><rect x="9" y="10" width="4" height="3" fill="#ffc020" /><path d="M4.500 6v6h4M4.500 8h4" stroke="#3878e8" /></>],
  ['自', <>{box}<rect x="4" y="4" width="8" height="9" fill="#ff7020" /><path d="M8 2v2" stroke="#ff7020" strokeWidth="2" /><path d="M5.500 6.500h5M5.500 8.500h5M5.500 10.500h5" stroke="#ffffff" /></>],
  ['F12', 'F12'],
  ['公式', 'f(x)'],
  ['圆', <>{box}<circle cx="8" cy="8" r="3.500" stroke="#1858c0" /></>],
  ['-', null],
  ['指标', <>{box}<path d="M2 7l3-3l2 2l3-2l2 1l2-1" stroke="#e02020" /><path d="M2 12l3-3l2 2l3-2l2 1l2-1" stroke="#2040e0" /></>],
  ['RSI', 'RSI'],
  ['资金', '$'],
  ['移动', <path d="M8 0L11 3.500H9V7H12.500V5L16 8L12.500 11V9H9V12.500H11L8 16L5 12.500H7V9H3.500V11L0 8L3.500 5V7H7V3.500H5Z" fill="#1060d0" />],
  ['画笔', <><path d="M2 14l2-5l8-7l3 3l-8 7z" fill="#e8a030" stroke="#906020" /><path d="M12 2l3 3l-2 1.500l-3-2.500z" fill="#f08080" /></>],
  ['-', null],
  ['F5', 'F5'],
  ['刷新', <>{box}<path d="M3 7a5 4 0 0 1 9-1M13 9a5 4 0 0 1-9 1" stroke="#30a030" strokeWidth="2" /><path d="M10 7h4V3zM6 9H2v4z" fill="#30a030" /></>],
];
const spans = ['1', '5', '15', '30', '60', '日', '周', '月', 'N', '多', '季', '年'];

function SideBar() {
  return (
    <aside className="flex w-6 shrink-0 flex-col bg-[#f0f0f0] font-['Noto_Sans_CJK_SC',sans-serif]">
      {icons.map(([name, art], i) => {
        if (name === '-') return <div key={i} className="h-2 py-[3px]"><div className="mx-0.5 h-px bg-[#909090]" /></div>;
        let inner: ReactNode = <Glyph>{art}</Glyph>;
        if (art === 'RSI') inner = <span className="text-[10px] font-bold text-[#2040d0]">RSI</span>;
        else if (art === '$') {
          inner = (
            <Glyph>
              <path d="M5 3.500L8 1L11 3.500Z" fill="#d02020" />
              <path d="M12 6C10 4 5 4 5 7C5 10 12 8 12 11.500C12 15 6 15 4 12.500" stroke="#808080" strokeWidth="2.500" />
              <path d="M11 6C10 4 4.500 4 4.500 7C4.500 10 11 8 11 11C11 14 6 14 4 12" stroke="#d02020" strokeWidth="2" />
            </Glyph>
          );
        } else if (art === 'f(x)') inner = <span className="h-[15px] w-4 rounded-sm border border-[#008080] bg-white text-[9px] leading-3 text-[#2040d0] italic">f(x)</span>;
        else if (typeof art === 'string') inner = <span className="h-[15px] w-4 border border-[#3878e8] bg-white text-[8px] leading-3 font-medium text-[#0030c0]">{art}</span>;
        return (
          <button key={i} type="button" aria-label={name} className="flex h-[23px] items-center justify-center">{inner}</button>
        );
      })}
      {spans.map((t) => (
        <button key={t} type="button" className={'h-[23px] text-xs leading-5 text-[#103880] ' + (t === '日' ? 'border-t border-l border-[#909090] bg-[#f8f8f8]' : '')}>{t}</button>
      ))}
    </aside>
  );
}

/* ---------- status bar ---------- */

function IndexItem({ name, last, chg, pct, amt, className }: { name: string; last: string; chg: string; pct: string; amt: string; className: string }) {
  return (
    <div className={'flex shrink-0 items-center text-[#f00000] ' + className}>
      <span className="w-[35px] text-base font-normal text-black">{name}</span>
      <span className={last.length < 6 ? 'w-[52px] pl-2' : 'w-[52px]'}>{last}</span>
      <span className="w-[52px] pr-px text-right">{chg}</span>
      <span className="w-[53px] text-right">{pct}</span>
      <span className="flex w-[66px] items-center justify-end text-black">{amt}<span className="text-base font-normal">亿</span></span>
    </div>
  );
}

function StatusBar() {
  return (
    <footer className="flex h-[22px] items-center overflow-hidden border-r border-[#909090] bg-[#f0f0f0] pr-1 font-['Liberation_Sans','Noto_Sans_CJK_SC',sans-serif] text-sm leading-5 font-bold whitespace-nowrap text-black">
      <IndexItem name="上证" last="3985.85" chg="35.54" pct="0.90%" amt="4143" className="w-[274px]" />
      <IndexItem name="深证" last="13457.86" chg="168.67" pct="1.27%" amt="5240" className="w-[276px]" />
      <IndexItem name="创业" last="17.97" chg="0.85" pct="4.96%" amt="4.67" className="w-[275px]" />
      <div className="flex h-full items-center gap-1 border-x border-[#909090] pr-2 pl-0.5">
        <span className="text-base font-normal">总成交</span>
        <span className="flex items-center">9446<span className="text-base font-normal">亿</span></span>
      </div>
      <span className="ml-1 font-['Liberation_Mono',monospace] text-[10px] font-normal">cgws.fg0986</span>
      <div className="ml-auto flex items-center gap-[5px]">
        <svg viewBox="0 0 14 14" className="size-3.5"><rect x="0.5" y="1.500" width="13" height="11" rx="2" fill="#ffffff" stroke="#2060c0" /><path d="M3 7.500h8" stroke="#2060c0" /><path d="M3 10h8" stroke="#e0b020" strokeWidth="2" /></svg>
        <svg viewBox="0 0 14 14" className="size-3.5"><rect x="0.5" y="0.500" width="13" height="13" fill="#f8f8f8" stroke="#808080" /><path d="M2 3.500h10M2 6h10M2 8.500h10M2 11h10" stroke="#909090" /></svg>
        <svg viewBox="0 0 13 14" className="h-3.5 w-[13px]"><rect x="0.5" y="0.500" width="12" height="13" rx="4" fill="#c8c000" stroke="#808000" /><path d="M4 6l2.500-3l2.500 3M6.500 3v5M6.500 10v2" stroke="#404000" fill="none" /></svg>
        <svg viewBox="0 0 12 14" className="h-3.5 w-3"><path d="M2 1L10 5L7 10L1 5ZM7 9l3 4M3 6v6h5" fill="#808080" stroke="#808080" /></svg>
        <svg viewBox="0 0 8 14" className="ml-1 h-3.5 w-2"><path d="M4 0L7 4H1Z" fill="#e00000" /><path d="M4 5L7 9H1Z" fill="#e0d000" /><path d="M4 9L7 13H1Z" fill="#008000" /></svg>
        <span className="ml-0.5 w-1 text-xs text-[#808080]">!</span>
        <span className="font-['Liberation_Mono',monospace] text-[10px] font-normal">10:05:08</span>
      </div>
    </footer>
  );
}

export default function App() {
  return (
    <div className="flex min-h-screen flex-col bg-[#0a0a0a] font-['Liberation_Sans','Noto_Sans_CJK_SC',sans-serif] text-xs text-[#d8d8d8]">
      <header className="flex h-[29px] items-center border-b border-[#607070] bg-[#e6e6e6] pr-2 pl-px whitespace-nowrap text-[#303030]">
        <svg viewBox="0 0 20 20" className="size-5">
          <circle cx="10" cy="10" r="10" fill="#d82018" />
          <path d="M5 6h3v2h4V6h3v9H5zM8 10h4v3H8zM10 5v5" fill="none" stroke="#ffffff" strokeWidth="1.2" />
        </svg>
        <span className="ml-0.5 text-sm font-medium text-[#101010]">长城证券烽火版</span>
        <nav className="ml-[76px] flex gap-4">
          {menus.map((m) => <button key={m} type="button">{m}</button>)}
        </nav>
        <nav className="ml-auto flex gap-3">
          {links.map((m) => <a key={m} href="#">{m}</a>)}
        </nav>
        <div className="ml-[14px] flex gap-4 text-[#506070]">
          <button type="button" aria-label="换肤"><Shirt size={14} fill="currentColor" /></button>
          <button type="button" aria-label="最小化"><Minus size={14} strokeWidth={3} /></button>
          <button type="button" aria-label="还原">
            <svg viewBox="0 0 14 14" className="size-3.5" fill="none" stroke="currentColor">
              <path d="M4 5V3h9v6h-2" strokeWidth="1" />
              <path d="M4 3.500h9" strokeWidth="2" />
              <rect x="1.500" y="6.500" width="8" height="5" />
              <path d="M1 7h9" strokeWidth="2" />
            </svg>
          </button>
          <button type="button" aria-label="关闭"><X size={14} strokeWidth={3} /></button>
        </div>
      </header>

      <div className="flex flex-1">
        <div className="flex min-w-0 flex-1 flex-col">
          <div className="flex flex-1">
            <main className="min-w-0 flex-1 border-r border-[#800000]">
              <div className="flex h-[21px] items-stretch border-b border-[#800000] leading-5 whitespace-nowrap">
                <button type="button" aria-label="面板" className="flex w-6 items-center justify-center border-r border-[#800000]">
                  <svg viewBox="0 0 13 12" className="h-3 w-[13px]"><rect x="0.5" y="0.500" width="12" height="11" rx="1" fill="none" stroke="#909090" /><rect x="7" y="2" width="4" height="8" fill="#909090" /></svg>
                </button>
                {periods.map(([t, w]) => (
                  <button key={t} type="button" className={w + (t === '日线' ? ' text-[#00ffff]' : '')}>{t}</button>
                ))}
                <div className="ml-auto flex pr-px">
                  {tools.map((t) => (
                    <button key={t} type="button" className="w-[35px] border-l border-[#800000]">{t}</button>
                  ))}
                </div>
              </div>

              <div className="relative">
                <MainChart />
                <div className="absolute inset-x-0 top-0 flex h-[18px] items-center gap-[5px] pl-0.5 text-[13px] leading-[18px] font-bold whitespace-nowrap">
                  <span className="font-medium">养元饮品(日线.前复权)</span>
                  <Fold />
                  <span className="font-medium">镇店之宝</span>
                  <Legend items={mainLegend} />
                  <svg viewBox="0 0 26 12" className="mr-[54px] ml-auto h-3 w-[26px]" fill="none" stroke="#707070">
                    <path d="M5 1L10 6L5 11L0.5 6Z" />
                    <rect x="14.500" y="0.500" width="11" height="11" rx="2" />
                    <path d="M21.500 3v6" strokeWidth="3" />
                  </svg>
                </div>
                <dl className="absolute top-[21px] left-4 grid grid-cols-[60px_auto] gap-y-[7px] text-[13px] leading-5 font-bold text-[#ffff00]">
                  {info.map(([k, v]) => (
                    <div key={k} className="contents">
                      <dt className="text-[#ff0000]">{k}</dt>
                      <dd>{v}</dd>
                    </div>
                  ))}
                </dl>
              </div>

              <div className="relative">
                <SubChart />
                <div className="absolute top-0 left-0 flex h-4 items-center gap-[5px] pl-0.5 text-[13px] leading-4 font-bold whitespace-nowrap">
                  <Fold />
                  <span className="font-medium">主控盘</span>
                  <Legend items={subLegend} />
                </div>
              </div>

              <div className="flex h-[17px] overflow-hidden border-b border-[#800000] leading-4 whitespace-nowrap">
                {tabs.map((t) => (
                  <button key={t} type="button" className={'shrink-0 border-r border-[#800000] pr-[3px] pl-1 ' + (t === '主控盘' ? 'text-[#00ffff]' : '')}>{t}</button>
                ))}
                <button type="button" className="w-3 shrink-0 border-r border-[#800000] pl-0.5 text-left">〉</button>
                <div className="ml-auto flex">
                  <button type="button" className="w-11 border-x border-[#800000]">指标B</button>
                  <button type="button" className="w-[41px] border-r border-[#800000]">模 板</button>
                  <button type="button" className="w-[25px] border-r border-[#800000]">+</button>
                  <button type="button" className="w-[26px]">-</button>
                </div>
              </div>
              <div className="flex h-[18px] border-b border-[#800000] leading-[17px] whitespace-nowrap">
                {['扩展∧', '关联报价', '资金流向', '综合资讯', '板块资讯'].map((t, i) => (
                  <button key={t} type="button" className={'border-r border-[#800000] pr-[3px] pl-1 ' + (i > 2 ? 'text-[#c8c800]' : '')}>{t}</button>
                ))}
                <div className="ml-auto flex text-[#c8c800]">
                  <button type="button" className="w-12 border-l border-[#800000]">图文F10</button>
                  <button type="button" className="w-[51px] border-l border-[#800000] text-left">侧边栏 «</button>
                </div>
              </div>
            </main>
            <QuotePanel />
          </div>
          <StatusBar />
        </div>
        <SideBar />
      </div>
    </div>
  );
}
